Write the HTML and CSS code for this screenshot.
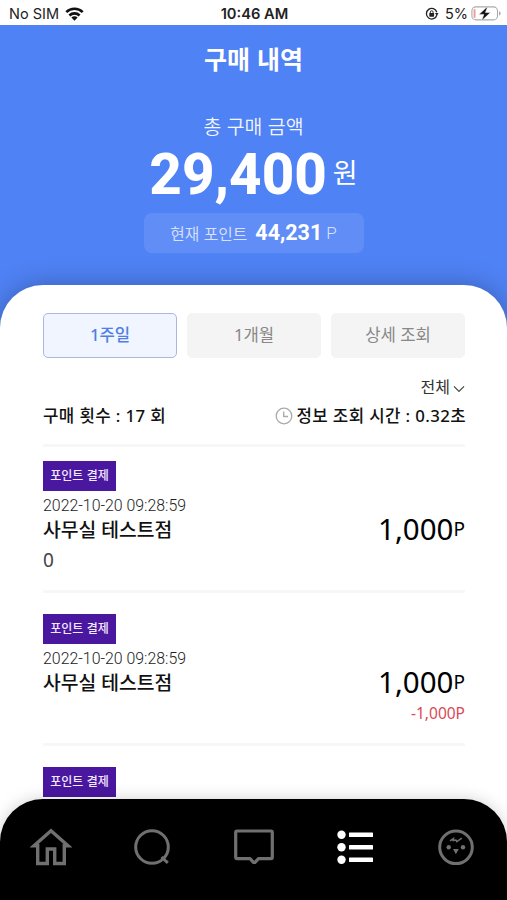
FILE: index.html
```html
<!DOCTYPE html>
<html lang="ko">
<head>
<meta charset="utf-8">
<title>구매 내역</title>
<link rel="stylesheet" href="styles.css">
</head>
<body>
<div class="screen">
  <header class="status">
    <div class="status-left">
      <span>No SIM</span>
      <svg width="19" height="14" viewBox="0 0 19 14"><g fill="none" stroke="#111" stroke-width="2.6"><path d="M1.3 5.1a11.7 11.7 0 0 1 16.4 0"/><path d="M4.4 8.5a7.3 7.3 0 0 1 10.2 0"/></g><path d="M9.5 13.7 6.4 10.6a4.4 4.4 0 0 1 6.2 0z" fill="#111"/></svg>
    </div>
    <div class="status-time">10:46 AM</div>
    <div class="status-right">
      <svg class="lock" width="14" height="14" viewBox="0 0 14 14"><path d="M11.8 8.2A5.300 5.300 0 1 1 11.8 5.200" fill="none" stroke="#222" stroke-width="1.300"/><path d="M10 6.100h3.500L11.900 9z" fill="#222"/><rect x="4.300" y="6" width="4.800" height="3.700" rx=".6" fill="#222"/><path d="M5.300 6.500V5.200a1.400 1.400 0 0 1 2.800 0v1.300" fill="none" stroke="#222"/></svg>
      <span>5%</span>
      <svg width="31" height="15" viewBox="0 0 31 15"><rect x=".9" y=".9" width="25.6" height="13" rx="4" fill="#fff" stroke="#aaa" stroke-width="1.1"/><rect x="2.6" y="3" width="1.9" height="9" rx=".9" fill="#ef9a97"/><path d="M28 5.200v4.400q1.600-.5 1.600-2.200T28 5.200" fill="#aaa"/><path d="M16.800.3 7.900 8.400h5l-2.400 6.400 8.900-8.200h-5z" fill="#111" stroke="#fff" stroke-width=".5"/></svg>
    </div>
  </header>
  <section class="hero">
    <h1>구매 내역</h1>
    <p class="total-label">총 구매 금액</p>
    <p class="total"><strong>29,400</strong><span>원</span></p>
    <div class="points"><span class="points-label">현재 포인트</span><strong>44,231</strong><span class="points-unit">P</span></div>
  </section>
  <main class="sheet">
    <div class="tabs">
      <button class="tab active">1주일</button>
      <button class="tab">1개월</button>
      <button class="tab">상세 조회</button>
    </div>
    <div class="filter"><span>전체</span><svg width="12" height="8" viewBox="0 0 12 8"><path d="M1 1.300 6 6.300l5-5" fill="none" stroke="#444" stroke-width="1.200"/></svg></div>
    <div class="summary">
      <span class="count">구매 횟수 : 17 회</span>
      <span class="elapsed"><svg width="18" height="18" viewBox="0 0 18 18"><g fill="none" stroke="#aaa" stroke-width="1.300"><circle cx="9" cy="9" r="7.800"/><path d="M8.700 4.500v5h4.300"/></g></svg><span>정보 조회 시간 : 0.32초</span></span>
    </div>
    <article class="entry">
      <span class="tag">포인트 결제</span>
      <time>2022-10-20 09:28:59</time>
      <div class="row"><span class="store">사무실 테스트점</span><span class="amount">1,000<small>P</small></span></div>
      <div class="row extra"><span class="note">0</span></div>
    </article>
    <article class="entry">
      <span class="tag">포인트 결제</span>
      <time>2022-10-20 09:28:59</time>
      <div class="row"><span class="store">사무실 테스트점</span><span class="amount">1,000<small>P</small></span></div>
      <div class="row extra"><span></span><span class="minus">-1,000P</span></div>
    </article>
    <article class="entry">
      <span class="tag">포인트 결제</span>
    </article>
  </main>
  <nav class="nav">
    <svg width="42" height="38" viewBox="0 0 42 38"><path d="M21 2.800 4 17.700H7.700V35.500h9.600V21h7.400v14.500h9.600V17.700H38z" fill="none" stroke="#707070" stroke-width="3.400"/></svg>
    <svg width="42" height="38" viewBox="0 0 42 38"><circle cx="21" cy="19" r="16.300" fill="none" stroke="#707070" stroke-width="3"/><path d="m30.500 29 6.300 5.800" stroke="#707070" stroke-width="3"/></svg>
    <svg width="42" height="38" viewBox="0 0 42 38"><path d="M4 3h34q1.300 0 1.300 1.300v25q0 1.300-1.300 1.300H25.500L22 34.400h-1.500L17 30.600H4q-1.300 0-1.300-1.300v-25Q2.700 3 4 3z" fill="none" stroke="#707070" stroke-width="3.200" stroke-linejoin="round"/></svg>
    <svg width="42" height="38" viewBox="0 0 42 38"><g fill="#fff"><circle cx="7.500" cy="6.800" r="4.200"/><circle cx="7.500" cy="19.300" r="4.200"/><circle cx="7.500" cy="31.800" r="4.200"/><rect x="15" y="4.500" width="24" height="4.600" rx=".6"/><rect x="15" y="17" width="24" height="4.600" rx=".6"/><rect x="15" y="29.500" width="24" height="4.600" rx=".6"/></g></svg>
    <svg width="42" height="38" viewBox="0 0 42 38"><circle cx="21" cy="19.300" r="16.300" fill="none" stroke="#707070" stroke-width="3"/><g fill="#707070"><circle cx="13.700" cy="19.300" r="2.200"/><circle cx="28" cy="19.300" r="2.200"/><path d="M18 21h5.800L20.900 26.300z"/></g><path d="m15 12.800 3.500-2.200-.3 2 2.800-.6.800 1.600 5-3.400" fill="none" stroke="#707070" stroke-width="1.500"/></svg>
  </nav>
</div>
</body>
</html>
```
FILE: styles.css
```css
* { box-sizing: border-box; }
body { margin: 0; background: #fff; font-family: "Noto Sans", "Noto Sans CJK KR", sans-serif; color: #111; }
h1, p { margin: 0; }
svg { display: block; flex: none; }
.screen { width: 507px; height: 900px; display: flex; flex-direction: column; overflow: hidden; background: #fff; }

.status { flex: none; height: 25px; display: grid; grid-template-columns: 1fr auto 1fr; align-items: center; padding: 2px 6px 0 8px; font: 14.500px/20px Inter, sans-serif; background: #fff; color: #222; }
.status-left, .status-right { display: flex; align-items: center; }
.status-left { gap: 6px; padding-left: 1px; }
.status-right { justify-content: flex-end; gap: 3px; margin-right: -1px; }
.lock { margin-right: 3px; }
.status-time { font-weight: 600; font-size: 14.700px; }

.hero { flex: none; height: 310px; display: flex; flex-direction: column; align-items: center; background: #4f82f5; color: #fff; font-family: "Noto Sans CJK KR", sans-serif; }
h1 { margin-top: 15px; font-size: 25px; line-height: 36px; font-weight: 700; }
.total-label { margin-top: 36px; font-size: 19.400px; line-height: 28px; font-weight: 350; opacity: .93; }
.total { display: flex; gap: 6px; height: 64px; line-height: 64px; }
.total strong { font: 800 56.500px/70px Roboto, sans-serif; }
.total span { font-size: 27px; line-height: 63px; font-weight: 400; }
.points { width: 220px; height: 40px; margin-top: 9px; display: flex; align-items: center; justify-content: center; border-radius: 8px; background: rgba(255,255,255,.1); }
.points-label { font-size: 15.800px; font-weight: 350; opacity: .75; }
.points strong { margin: 0 4px 0 8px; font: 700 21.500px/42px Roboto, sans-serif; }
.points-unit { font: 300 17px/42px Roboto, sans-serif; opacity: .75; }

.sheet { flex: 1; min-height: 0; margin-top: -50px; padding: 28px 42px 0 43px; border-radius: 43px 43px 0 0; background: #fff; box-shadow: 0 0 26px rgba(0,0,0,.27); }
.tabs { display: grid; grid-template-columns: repeat(3, 1fr); gap: 10px; }
.tab { height: 45px; padding: 0 0 2px; border: 1px solid #f4f4f4; border-radius: 5px; background: #f4f4f4; color: #888; font: 400 16.700px/24px "Noto Sans", "Noto Sans CJK KR", sans-serif; }
.tab.active { background: #f0f5ff; border-color: #a9b8dc; color: #4f7fe4; font-weight: 500; }
.filter { display: flex; justify-content: flex-end; align-items: center; gap: 3px; height: 24px; margin-top: 17px; font-size: 16px; color: #333; }
.filter span { margin-top: -2px; }
.filter svg { margin-top: 3px; }
.summary { display: flex; justify-content: space-between; height: 48px; padding-top: 4px; border-bottom: 3px solid #f7f7f7; font-size: 16.800px; line-height: 26px; font-weight: 500; letter-spacing: .38px; white-space: nowrap; }
.elapsed { display: flex; align-items: center; height: 26px; gap: 3px; margin-right: -1px; }
.entry { height: 153px; padding-top: 21px; border-bottom: 3px solid #f7f7f7; }
.summary + .entry { height: 146px; padding-top: 14px; }
.tag { display: block; width: 73px; height: 30px; background: #4a179f; color: #f2e8ff; font: 500 12px/28px "Noto Sans CJK KR", sans-serif; text-align: center; }
time { display: block; margin-top: 5px; font: 300 15.900px/20px Roboto, sans-serif; color: #222; }
.row { display: flex; justify-content: space-between; align-items: center; height: 28px; white-space: nowrap; }
.store { font-size: 19.300px; line-height: 28px; font-weight: 500; }
.amount { margin-top: -2px; font-size: 29.500px; line-height: 28px; color: #000; }
.amount small { font-size: 19px; vertical-align: 4px; line-height: 1; }
.extra { height: 32px; }
.note { font-size: 19px; color: #444; }
.minus { font-size: 15.500px; font-weight: 400; color: #d94a58; }

.nav { position: relative; flex: none; height: 101px; margin-top: -50px; display: flex; justify-content: space-between; padding: 29px 30px 0; border-radius: 43px 43px 0 0; background: #000; box-shadow: 0 0 16px rgba(0,0,0,.18); }
```
